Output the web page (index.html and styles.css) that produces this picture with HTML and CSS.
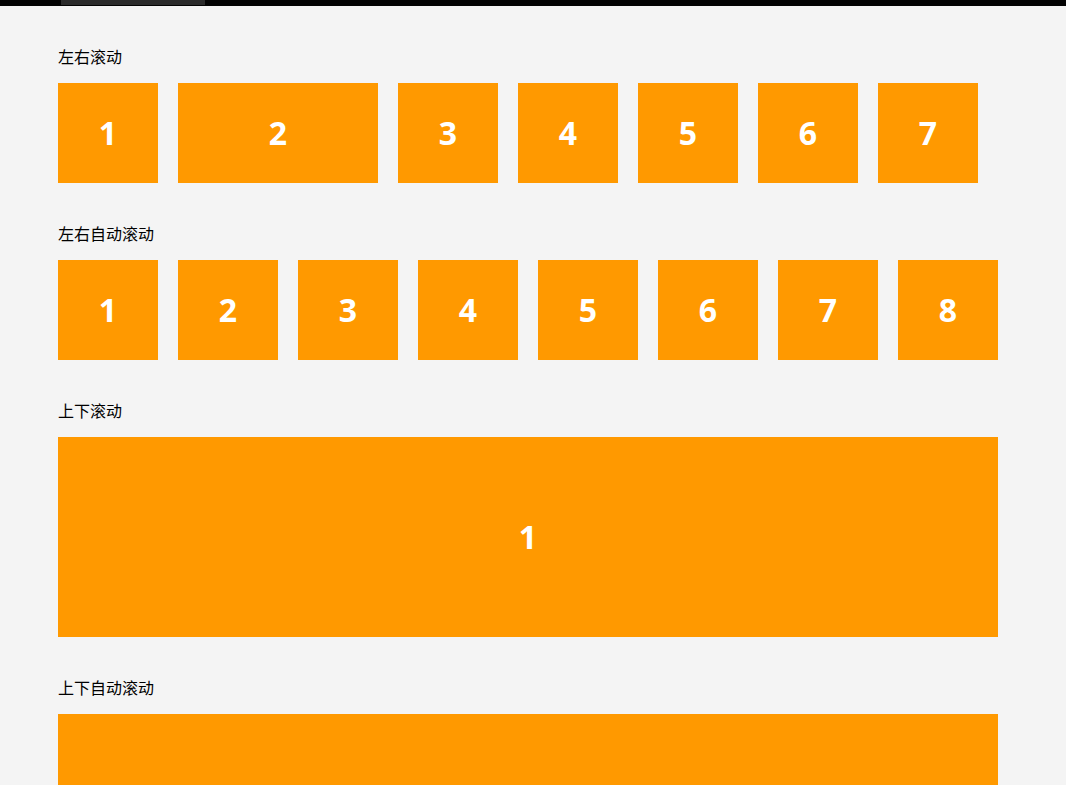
FILE: index.html
```html
<!DOCTYPE html>
<html lang="zh">
<head>
<meta charset="utf-8">
<title>滚动</title>
<link rel="stylesheet" href="styles.css">
</head>
<body>
<div class="topbar"><div class="indicator"></div></div>
<main class="page">
  <section class="section">
    <div class="label">左右滚动</div>
    <div class="row">
      <div class="box">1</div>
      <div class="box wide">2</div>
      <div class="box">3</div>
      <div class="box">4</div>
      <div class="box">5</div>
      <div class="box">6</div>
      <div class="box">7</div>
    </div>
  </section>
  <section class="section">
    <div class="label">左右自动滚动</div>
    <div class="row">
      <div class="box">1</div>
      <div class="box">2</div>
      <div class="box">3</div>
      <div class="box">4</div>
      <div class="box">5</div>
      <div class="box">6</div>
      <div class="box">7</div>
      <div class="box">8</div>
    </div>
  </section>
  <section class="section">
    <div class="label">上下滚动</div>
    <div class="box full">1</div>
  </section>
  <section class="section">
    <div class="label">上下自动滚动</div>
    <div class="box full">1</div>
  </section>
</main>
</body>
</html>
```
FILE: styles.css
```css
html, body {
  margin: 0;
  padding: 0;
  overflow: hidden;
  background: #f4f4f4;
  font-family: "Noto Sans CJK SC", "Noto Sans", sans-serif;
  color: #000;
}
.topbar {
  height: 6px;
  background: #030303;
}
.indicator {
  margin-left: 61px;
  width: 144px;
  height: 5px;
  background: #2b2b2b;
}
.page {
  padding: 40px 0 0 58px;
  display: flex;
  flex-direction: column;
  gap: 40px;
}
.section {
  display: flex;
  flex-direction: column;
  gap: 17px;
}
.label {
  font-size: 16px;
  line-height: 20px;
  height: 20px;
}
.row {
  display: flex;
  gap: 20px;
}
.box {
  width: 100px;
  height: 100px;
  box-sizing: border-box;
  padding-bottom: 2px;
  flex: none;
  background: #ff9900;
  color: #fff;
  font-family: "Open Sans", "Noto Sans", sans-serif;
  font-weight: 700;
  font-size: 32px;
  display: flex;
  align-items: center;
  justify-content: center;
}
.box.wide {
  width: 200px;
}
.box.full {
  width: 940px;
  height: 200px;
}
```
